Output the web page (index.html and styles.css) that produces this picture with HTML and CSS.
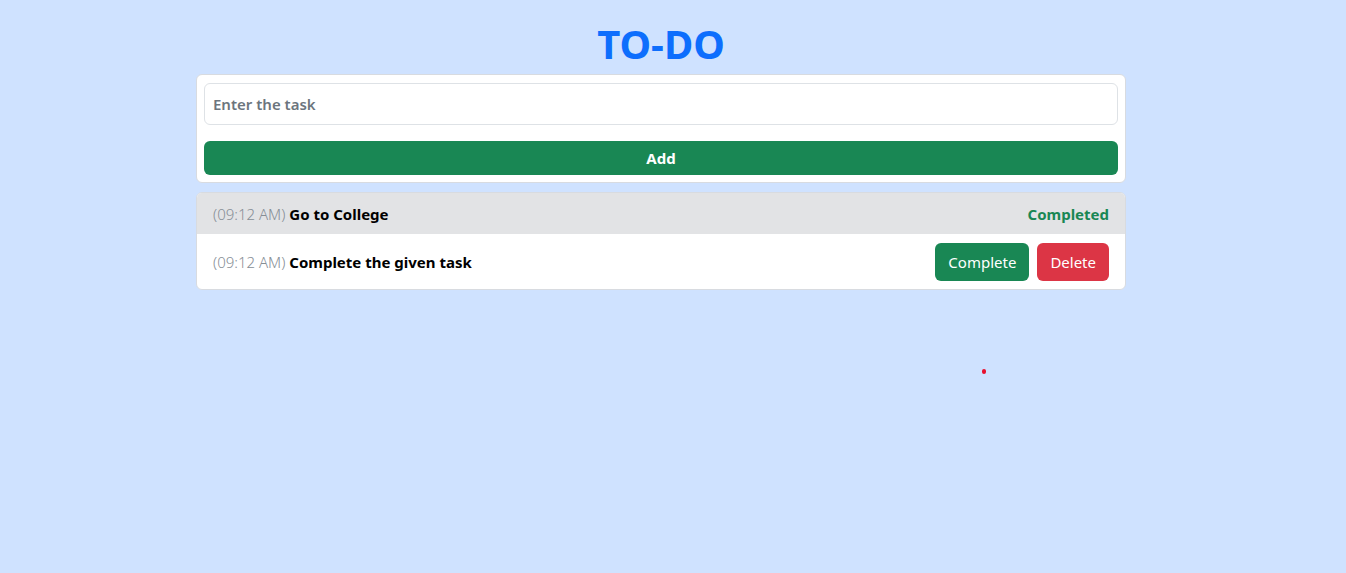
FILE: index.html
```html
<!DOCTYPE html>
<html>
<head>
<meta charset="utf-8">
<link rel="stylesheet" href="styles.css">
</head>
<body>
<div class="page">
  <h1 class="title">TO-DO</h1>
  <div class="card form-card">
    <input class="task-input" type="text" placeholder="Enter the task">
    <button class="btn btn-add">Add</button>
  </div>
  <ul class="card list">
    <li class="item done">
      <span class="text"><span class="time">(09:12 AM)</span> <b>Go to College</b></span>
      <span class="status">Completed</span>
    </li>
    <li class="item">
      <span class="text"><span class="time">(09:12 AM)</span> <b>Complete the given task</b></span>
      <span class="actions">
        <button class="btn btn-complete">Complete</button>
        <button class="btn btn-delete">Delete</button>
      </span>
    </li>
  </ul>
</div>
<span class="dot"></span>
</body>
</html>
```

FILE: styles.css
```css
html, body {
  margin: 0;
  padding: 0;
  background: #cfe2ff;
  font-family: "Noto Sans", "Open Sans", sans-serif;
  color: #212529;
}
body {
  padding-right: 24px;
}
.page {
  width: 930px;
  margin: 0 auto;
  padding-top: 20px;
  display: flex;
  flex-direction: column;
}
.title {
  margin: 0 0 6px;
  text-align: center;
  color: #0d6efd;
  font-size: 40px;
  font-weight: 700;
  line-height: 48px;
}
.card {
  background: #fff;
  border: 1px solid #d8dbe0;
  border-radius: 6px;
}
.form-card {
  padding: 8px 7px 7px;
  display: flex;
  flex-direction: column;
  gap: 16px;
}
.task-input {
  height: 42px;
  box-sizing: border-box;
  border: 1px solid #dee2e6;
  border-radius: 6px;
  padding: 0 8px;
  font-family: inherit;
  font-size: 15px;
  font-weight: 600;
  outline: none;
}
.task-input::placeholder { color: #6c757d; }
.btn {
  border: none;
  border-radius: 6px;
  color: #fff;
  font-family: inherit;
  font-size: 15px;
  cursor: pointer;
}
.btn-add {
  height: 34px;
  background: #198754;
  font-weight: 700;
}
.list {
  list-style: none;
  margin: 9px 0 0;
  padding: 0;
  overflow: hidden;
}
.item {
  display: flex;
  align-items: center;
  justify-content: space-between;
  padding: 0 16px;
  height: 55px;
  font-size: 15px;
}
.item.done {
  height: 41px;
  background: #e2e3e5;
}
.time {
  color: #868e96;
  font-weight: 300;
}
.text b { color: #000; font-weight: 700; }
.status {
  color: #198754;
  font-weight: 700;
}
.actions {
  display: flex;
  gap: 8px;
}
.btn-complete, .btn-delete {
  height: 38px;
  padding: 0 13px;
  font-weight: 400;
}
.btn-complete { background: #198754; }
.btn-delete { background: #dc3545; }
.dot {
  position: absolute;
  left: 982px;
  top: 369px;
  width: 4px;
  height: 5px;
  border-radius: 2px;
  background: #e8102e;
}
```
